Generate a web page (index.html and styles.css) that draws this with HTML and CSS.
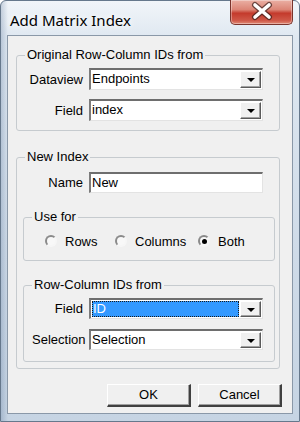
FILE: index.html
```html
<!DOCTYPE html>
<html>
<head>
    <meta charset="utf-8" />
    <title>Add Matrix Index</title>
    <link rel="stylesheet" href="styles.css">
</head>
<body>
    <section class="window">
        <div class="titlebar">
            <span class="title">Add Matrix Index</span>
            <div class="close">
                <svg width="63" height="25" viewBox="0 0 63 25">
                    <path d="M25 6 L39 18 M39 6 L25 18" stroke="#3b1f1c" stroke-width="6" stroke-linecap="round" fill="none" opacity="0.7"/>
                    <path d="M25 6 L39 18 M39 6 L25 18" stroke="#ffffff" stroke-width="3.6" stroke-linecap="round" fill="none"/>
                </svg>
            </div>
        </div>
        <div class="client">
            <fieldset class="group outer first">
                <legend>Original Row-Column IDs from</legend>
                <div class="row">
                    <label class="lbl">Dataview</label>
                    <div class="combo"><span class="val">Endpoints</span><span class="drop"></span></div>
                </div>
                <div class="row">
                    <label class="lbl">Field</label>
                    <div class="combo"><span class="val">index</span><span class="drop"></span></div>
                </div>
            </fieldset>

            <fieldset class="group outer second">
                <legend>New Index</legend>
                <div class="row short">
                    <label class="lbl">Name</label>
                    <div class="edit"><span class="val">New</span></div>
                </div>

                <fieldset class="group inner usefor">
                    <legend>Use for</legend>
                    <div class="radios">
                        <div class="radio w1"><span class="dot"></span>Rows</div>
                        <div class="radio w2"><span class="dot"></span>Columns</div>
                        <div class="radio"><span class="dot on"></span>Both</div>
                    </div>
                </fieldset>

                <fieldset class="group inner idsfrom">
                    <legend>Row-Column IDs from</legend>
                    <div class="row short">
                        <label class="lbl small">Field</label>
                        <div class="combo"><span class="val selected">ID</span><span class="drop"></span></div>
                    </div>
                    <div class="row short">
                        <label class="lbl small">Selection</label>
                        <div class="combo"><span class="val">Selection</span><span class="drop"></span></div>
                    </div>
                </fieldset>
            </fieldset>

            <div class="buttons">
                <div class="btn">OK</div>
                <div class="btn">Cancel</div>
            </div>
        </div>
    </section>
</body>
</html>
```

FILE: styles.css
```css
*{
    padding:0;
    margin:0;
    box-sizing:border-box;
}
body{
    width:300px;
    height:422px;
    overflow:hidden;
    font:13px "Liberation Sans", Arial, sans-serif;
    color:#000;
    background:#fff;
}

/* window frame */
.window{
    width:300px;
    height:422px;
    display:flex;
    flex-direction:column;
    border:1px solid #66788c;
    border-radius:6px 6px 0 0;
    background:
        linear-gradient(to right, rgba(70,100,140,0.25) 0, rgba(70,100,140,0) 7px),
        linear-gradient(to bottom, #f1f5f9 0, #dfe8f1 36px, #cfdbe8 60%, #c6d4e3 100%);
}
.titlebar{
    height:34px;
    display:flex;
    justify-content:space-between;
    align-items:flex-start;
}
.title{
    margin:9px 0 0 9px;
    line-height:20px;
    font:15px "Noto Sans", "Open Sans", sans-serif;
    text-shadow:0 0 6px #fff, 0 0 10px #fff;
}
.close{
    width:63px;
    height:25px;
    margin:-1px 6px 0 0;
    border:1px solid #7a342c;
    border-top:none;
    border-radius:0 0 5px 5px;
    background:linear-gradient(to bottom, #eab0a4 0, #dc8576 40%, #c43a2c 55%, #cf5848 85%, #e08a76 100%);
    box-shadow:inset 0 0 0 1px rgba(255,255,255,0.35);
    overflow:hidden;
}
.close svg{
    display:block;
    margin:-1px 0 0 -1px;
}

/* client area */
.client{
    flex-grow:1;
    margin:0 6px 7px 6px;
    border:1px solid #8a98a8;
    background:#f0f0f0;
    display:flex;
    flex-direction:column;
}

/* group boxes */
.group{
    border:1px solid #c6cbcf;
    border-radius:3px;
    min-width:0;
}
.group legend{
    padding:0 2px;
    line-height:16px;
}
.outer{
    margin:0 12px 0 8px;
}
.first{
    margin-top:11px;
    padding:5px 0 9px 8px;
}
.second{
    margin-top:18px;
    padding:7px 4px 6px 8px;
}
.inner{
    margin:16px 0 0 -2px;
}
.usefor{
    padding:8px 0 11px 8px;
}
.idsfrom{
    padding:5px 0 11px 8px;
}

/* rows */
.row{
    display:flex;
    align-items:center;
    height:22px;
}
.row + .row{
    margin-top:9px;
}
.row.short{
    height:21px;
}
.idsfrom .row + .row{
    margin-top:10px;
}
.lbl{
    width:58px;
    margin-right:6px;
    text-align:right;
}
.lbl.small{
    width:51px;
}

/* combos and edits */
.combo, .edit{
    width:174px;
    height:100%;
    display:flex;
    align-items:stretch;
    background:#fff;
    border-style:solid;
    border-width:2px 1px 1px 2px;
    border-color:#6e6e6e #e3e3e3 #e3e3e3 #7c7c7c;
}
.val{
    flex-grow:1;
    padding:0 0 0 1px;
    line-height:17px;
    white-space:nowrap;
}
.val.selected{
    margin:1px;
    padding-left:1px;
    line-height:15px;
    background:#3399ff;
    color:#fff;
    outline:1px dotted #1a1a1a;
    outline-offset:-1px;
}
.drop{
    width:21px;
    margin:1px 1px 1px 0;
    background:#f0f0f0;
    border-style:solid;
    border-width:1px;
    border-color:#fff #5a5a5a #5a5a5a #fff;
    box-shadow:inset -1px -1px 0 #a0a0a0;
    display:flex;
    justify-content:center;
    align-items:center;
}
.drop::after{
    content:"";
    border-left:4px solid transparent;
    border-right:4px solid transparent;
    border-top:4px solid #000;
    margin-top:1px;
}

/* radios */
.radios{
    display:flex;
    align-items:center;
    height:16px;
    padding-left:13px;
}
.radio{
    display:flex;
    align-items:center;
}
.radio.w1{
    width:70px;
}
.radio.w2{
    width:83px;
}
.dot{
    width:12px;
    height:12px;
    margin-right:8px;
    border-radius:50%;
    border:2px solid;
    border-color:#8a8a8a #f6f6f6 #f6f6f6 #8a8a8a;
    background:#f8f8f8;
    display:flex;
    justify-content:center;
    align-items:center;
}
.dot.on::after{
    content:"";
    width:5px;
    height:5px;
    border-radius:50%;
    background:#000;
}

/* buttons */
.buttons{
    display:flex;
    justify-content:flex-end;
    gap:7px;
    margin:15px 10px 0 0;
}
.btn{
    width:84px;
    height:23px;
    line-height:19px;
    text-align:center;
    background:#f0f0f0;
    border-style:solid;
    border-width:1px 2px 2px 1px;
    border-color:#fff #404040 #404040 #fff;
    box-shadow:inset -1px -1px 0 #a0a0a0;
}
```
